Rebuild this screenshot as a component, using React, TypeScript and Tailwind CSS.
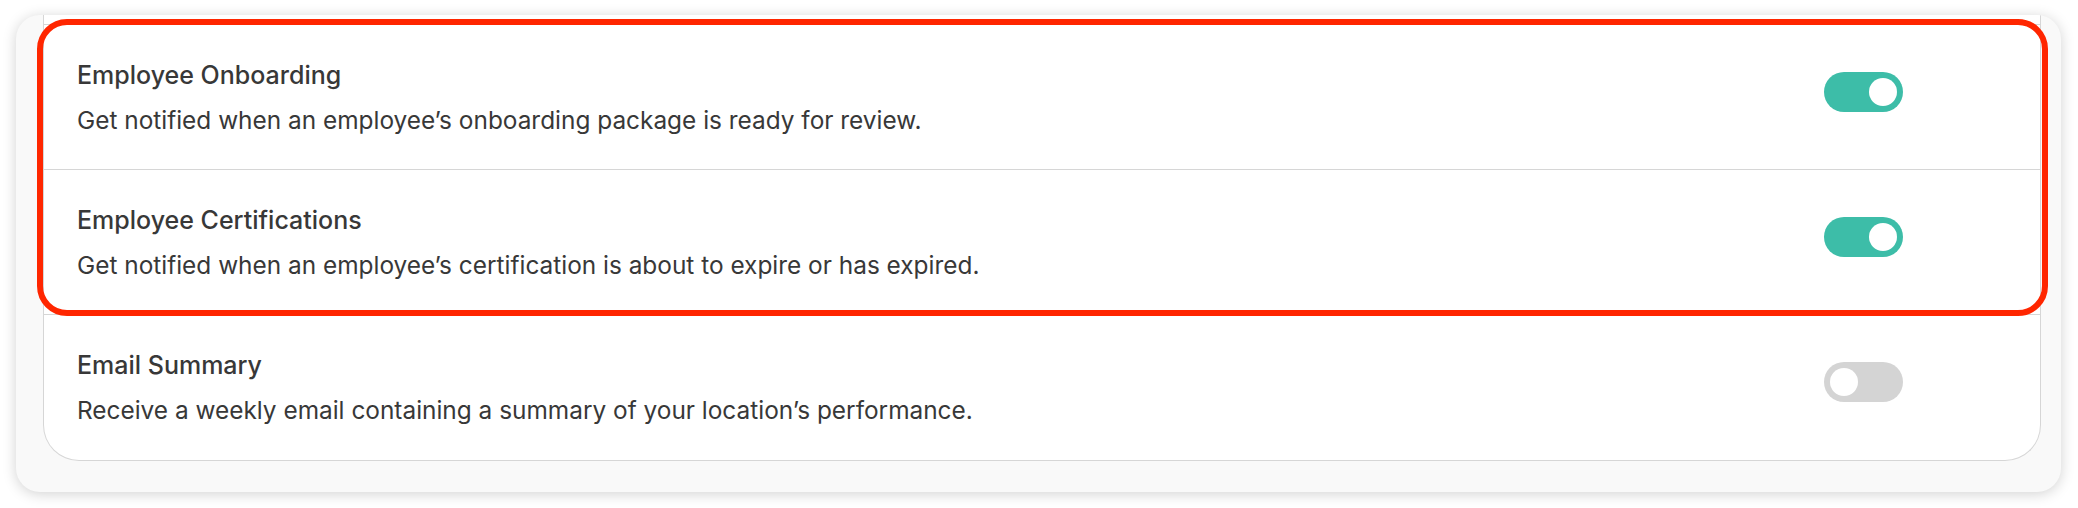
import React from "react";

type Row = {
  title: string;
  desc: string;
  on: boolean;
};

const rows: Row[] = [
  {
    title: "Employee Onboarding",
    desc: "Get notified when an employee\u2019s onboarding package is ready for review.",
    on: true,
  },
  {
    title: "Employee Certifications",
    desc: "Get notified when an employee\u2019s certification is about to expire or has expired.",
    on: true,
  },
  {
    title: "Email Summary",
    desc: "Receive a weekly email containing a summary of your location\u2019s performance.",
    on: false,
  },
];

const Toggle = ({ on }: { on: boolean }) => (
  <div
    className={`flex h-[40px] w-[79px] shrink-0 items-center rounded-full px-[6px] ${
      on ? "justify-end bg-[#3dbda8]" : "justify-start bg-[#d4d4d4]"
    }`}
  >
    <div className="h-[28px] w-[28px] rounded-full bg-white" />
  </div>
);

const SettingRow = ({ row, last }: { row: Row; last: boolean }) => (
  <div
    className={`flex h-[145px] items-start pl-[33px] pr-[137px] ${
      last ? "" : "border-b-[1.5px] border-[#d6d6d6]"
    }`}
  >
    <div className="flex flex-col pt-[35px]">
      <h3 className="text-[25px] leading-[30px] font-medium text-[#383838]">{row.title}</h3>
      <p className="mt-[15px] text-[24.4px] leading-[30px] text-[#383838]">{row.desc}</p>
    </div>
    <div className="ml-auto pt-[47px]">
      <Toggle on={row.on} />
    </div>
  </div>
);

const App = () => {
  return (
    <div
      className="relative h-[508px] w-[2078px] overflow-hidden bg-white pt-[15px] pl-[16px]"
      style={{ fontFamily: "Inter, 'Noto Sans', sans-serif" }}
    >
      <div className="flex h-[477px] w-[2045px] flex-col justify-end overflow-hidden rounded-[24px] bg-[#f9f9f9] pb-[31px] pl-[27px] pr-[20px] shadow-[0_2px_14px_rgba(0,0,0,0.18)]">
        <div className="rounded-b-[36px] border-[1.5px] border-t-0 border-[#d6d6d6] bg-white">
          <div className="h-[40px] border-b-[1.5px] border-[#d6d6d6]" />
          {rows.map((row, i) => (
            <SettingRow key={row.title} row={row} last={i === rows.length - 1} />
          ))}
        </div>
      </div>

      {/* highlight box */}
      <div className="pointer-events-none absolute top-[19px] left-[37px] h-[297px] w-[2011px] rounded-[30px] border-[6px] border-[#ff2600]" />
    </div>
  );
};

export default App;
